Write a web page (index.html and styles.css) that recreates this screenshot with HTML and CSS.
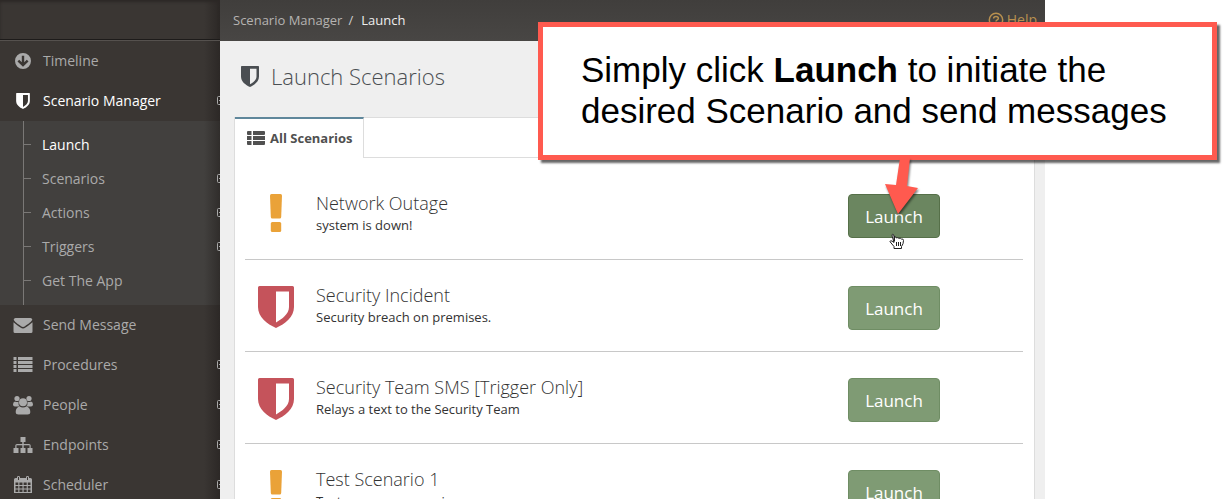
FILE: index.html
```html
<!DOCTYPE html>
<html lang="en">
<head>
    <meta charset="UTF-8">
    <meta name="viewport" content="width=device-width, initial-scale=1.0">
    <title>Launch Scenarios</title>
    <link rel="stylesheet" href="styles.css">
</head>
<body>
    <svg class="sprite" aria-hidden="true">
        <symbol id="icon-shield" viewBox="0 0 36 42">
            <path fill-rule="evenodd" d="M1.500 0H34.500Q36 0 36 1.500V21C36 31 27 38 18 42C9 38 0 31 0 21V1.500Q0 0 1.500 0ZM18 5.500V36.500C24 33 31 28 31 21V5.500Z"/>
        </symbol>
        <symbol id="icon-exclamation" viewBox="0 0 12 38">
            <path d="M1.500 0H10.500Q12 0 12 1.500L11.200 23Q11.100 24.500 9.700 24.500H2.300Q.9 24.500 .8 23L0 1.500Q0 0 1.500 0Z"/>
            <rect x=".8" y="28" width="10.400" height="10" rx="1.500"/>
        </symbol>
        <symbol id="icon-plus" viewBox="0 0 9 9">
            <path d="M1.500 .5H7.500Q8.500 .5 8.500 1.500V7.500Q8.500 8.500 7.500 8.500H1.500Q.5 8.500 .5 7.500V1.500Q.5 .5 1.500 .5ZM2 4.500H7M4.500 2V7" fill="none" stroke="currentColor"/>
        </symbol>
    </svg>

    <div class="app">
        <nav class="sidebar">
            <div class="sidebar-head"></div>
            <ul class="menu">
                <li>
                    <a href="#" class="menu-link">
                        <svg class="menu-icon" viewBox="0 0 20 20"><path fill-rule="evenodd" d="M10 2A8 8 0 1 1 10 18A8 8 0 1 1 10 2ZM8.800 4.800V11.200L6.200 8.700L4.500 10.400L10 15.700L15.500 10.400L13.800 8.700L11.200 11.200V4.800Z"/></svg>
                        Timeline
                    </a>
                </li>
                <li>
                    <a href="#" class="menu-link active">
                        <svg class="menu-icon"><use href="#icon-shield" x="3" y="2" width="14" height="16"/></svg>
                        Scenario Manager
                        <svg class="expand"><use href="#icon-plus"/></svg>
                    </a>
                    <ul class="submenu">
                        <li><a href="#" class="active">Launch</a></li>
                        <li><a href="#">Scenarios <svg class="expand"><use href="#icon-plus"/></svg></a></li>
                        <li><a href="#">Actions <svg class="expand"><use href="#icon-plus"/></svg></a></li>
                        <li><a href="#">Triggers <svg class="expand"><use href="#icon-plus"/></svg></a></li>
                        <li><a href="#">Get The App</a></li>
                    </ul>
                </li>
                <li>
                    <a href="#" class="menu-link">
                        <svg class="menu-icon" viewBox="0 0 20 20"><path d="M2.500 3H17.500Q19 3 19.300 4.500C19 6.500 15 9 12 11.200Q10 12.700 8 11.200C5 9 1 6.500 .7 4.500Q1 3 2.500 3ZM.5 7.200C3 9.500 5.500 11 7.500 12.500Q10 14.300 12.500 12.500C14.500 11 17 9.500 19.500 7.200V16.500Q19.500 18 18 18H2Q.5 18 .5 16.500Z"/></svg>
                        Send Message
                    </a>
                </li>
                <li>
                    <a href="#" class="menu-link">
                        <svg class="menu-icon" viewBox="0 0 20 20"><path d="M.5 2H3.500V5H.5ZM5 2H19.500V5H5ZM.5 6H3.500V9H.5ZM5 6H19.500V9H5ZM.5 10H3.500V13H.5ZM5 10H19.500V13H5ZM.5 14H3.500V17H.5ZM5 14H19.500V17H5Z"/></svg>
                        Procedures
                        <svg class="expand"><use href="#icon-plus"/></svg>
                    </a>
                </li>
                <li>
                    <a href="#" class="menu-link">
                        <svg class="menu-icon" viewBox="0 0 20 20"><circle cx="4" cy="3.500" r="2.600"/><circle cx="16" cy="3.500" r="2.600"/><path d="M2 6.500Q4 7.500 5.500 6.500Q5 10 7 11.500H2Q0 11.500 0 9.500Q0 7 2 6.500ZM18 6.500Q16 7.500 14.500 6.500Q15 10 13 11.500H18Q20 11.500 20 9.500Q20 7 18 6.500Z"/><circle cx="10" cy="7.300" r="4"/><path d="M6.500 11.500Q10 13.500 13.500 11.500Q17.300 12.500 17.300 17Q17.300 19.500 14.500 19.500H5.500Q2.700 19.500 2.700 17Q2.700 12.500 6.500 11.500Z"/></svg>
                        People
                        <svg class="expand"><use href="#icon-plus"/></svg>
                    </a>
                </li>
                <li>
                    <a href="#" class="menu-link">
                        <svg class="menu-icon" viewBox="0 0 20 20"><path d="M7.500 2H12.500V7H10.700V9H16Q17.700 9 17.700 10.500V13H19.500V18H14.500V13H16.500V10.200H10.700V13H12.500V18H7.500V13H9.300V10.200H3.500V13H5.500V18H.5V13H2.300V10.500Q2.300 9 4 9H9.300V7H7.500Z"/></svg>
                        Endpoints
                        <svg class="expand"><use href="#icon-plus"/></svg>
                    </a>
                </li>
                <li>
                    <a href="#" class="menu-link">
                        <svg class="menu-icon" viewBox="0 0 20 20"><path fill-rule="evenodd" d="M2.500 3H4V2Q4 1 5.500 1T7 2V3H13V2Q13 1 14.500 1T16 2V3H17.500Q19 3 19 4.500V18H1V4.500Q1 3 2.500 3ZM2.500 7.500V10H5.300V7.500ZM6.400 7.500V10H9.500V7.500ZM10.600 7.500V10H13.700V7.500ZM14.800 7.500V10H17.500V7.500ZM2.500 11V13.500H5.300V11ZM6.400 11V13.500H9.500V11ZM10.600 11V13.500H13.700V11ZM14.800 11V13.500H17.500V11ZM2.500 14.500V17H5.300V14.500ZM6.400 14.500V17H9.500V14.500ZM10.600 14.500V17H13.700V14.500ZM14.800 14.500V17H17.500V14.500Z"/><path d="M5.500 2V5M14.500 2V5" stroke="#3a3633"/></svg>
                        Scheduler
                        <svg class="expand"><use href="#icon-plus"/></svg>
                    </a>
                </li>
            </ul>
        </nav>

        <main class="content">
            <header class="topbar">
                <div class="breadcrumb">
                    <a href="#">Scenario Manager</a>
                    <span>/</span>
                    <strong>Launch</strong>
                </div>
                <a href="#" class="help">
                    <svg viewBox="0 0 16 16"><circle cx="8" cy="8" r="6.700"/><path d="M5.600 6.500Q5.700 4.500 8 4.500T10.400 6.300Q10.400 7.300 9.200 7.900Q8 8.500 8 9.500M8 10.600V12.200"/></svg>
                    Help
                </a>
            </header>

            <h1 class="page-title">
                <svg><use href="#icon-shield"/></svg>
                Launch Scenarios
            </h1>

            <section class="panel">
                <div class="tabs">
                    <a href="#" class="tab">
                        <svg viewBox="0 0 18 14"><path d="M1 0H4.500V4H1Q0 4 0 3V1Q0 0 1 0ZM6 0H17Q18 0 18 1V3Q18 4 17 4H6ZM0 5H4.500V9H0ZM6 5H18V9H6ZM0 10H4.500V14H1Q0 14 0 13ZM6 10H18V13Q18 14 17 14H6Z"/></svg>
                        All Scenarios
                    </a>
                </div>
                <ul class="scenarios">
                    <li class="scenario">
                        <svg class="scenario-icon warning"><use href="#icon-exclamation"/></svg>
                        <div>
                            <h2>Network Outage</h2>
                            <p>system is down!</p>
                        </div>
                        <button type="button" class="launch hover">Launch</button>
                    </li>
                    <li class="scenario">
                        <svg class="scenario-icon danger"><use href="#icon-shield"/></svg>
                        <div>
                            <h2>Security Incident</h2>
                            <p>Security breach on premises.</p>
                        </div>
                        <button type="button" class="launch">Launch</button>
                    </li>
                    <li class="scenario">
                        <svg class="scenario-icon danger"><use href="#icon-shield"/></svg>
                        <div>
                            <h2>Security Team SMS [Trigger Only]</h2>
                            <p>Relays a text to the Security Team</p>
                        </div>
                        <button type="button" class="launch">Launch</button>
                    </li>
                    <li class="scenario">
                        <svg class="scenario-icon warning"><use href="#icon-exclamation"/></svg>
                        <div>
                            <h2>Test Scenario 1</h2>
                            <p>Test message scenario</p>
                        </div>
                        <button type="button" class="launch">Launch</button>
                    </li>
                </ul>
            </section>
        </main>
    </div>

    <aside class="callout">
        Simply click <strong>Launch</strong> to initiate the<br>
        desired Scenario and send messages
        <svg class="arrow" viewBox="0 0 40 60"><path d="M16 0H26L23 28L34 30L14 56L1 26L12 27Z"/></svg>
        <svg class="pointer" viewBox="0 0 16 17"><path d="M5 9V3Q4.500 1 3.700 1.200Q2.700 1.500 3.200 3.200L5 9.500L3 8Q1 7.300 1 8.700L5 13.500V15.500H12.500V13.500Q14.500 11 14.500 7.500Q14.500 5.500 12.300 6Q11.500 4.700 9.800 5.300Q9 4.200 7.200 4.900L5.500 3V8M7.500 9V13M9.500 9V13M11.500 9V13"/></svg>
    </aside>
</body>
</html>
```
FILE: styles.css
```css
* {
    box-sizing: border-box;
}
body {
    margin: 0;
    height: 100vh;
    position: relative;
    overflow: hidden;
    background: #fff;
    font-family: 'Open Sans', sans-serif;
    font-size: 14px;
    color: #333;
}
ul {
    list-style: none;
    margin: 0;
    padding: 0;
}
a {
    color: inherit;
    text-decoration: none;
}
svg {
    flex: none;
    fill: currentColor;
}
.sprite {
    position: absolute;
    width: 0;
    height: 0;
}
.app {
    display: grid;
    grid-template-columns: 220px 1fr;
    min-height: 100%;
    margin-right: 183px;
}

/* Sidebar */
.sidebar {
    overflow: hidden;
    background: linear-gradient(to left, #2c2826, transparent 16px) #3a3633;
    color: #aaa;
}
.sidebar-head {
    height: 41px;
    border-bottom: 1px solid #55514e;
    box-shadow: inset 0 -1px #1d1b1a, inset 0 2px 3px #2c2826;
}
.menu-link {
    display: flex;
    align-items: center;
    gap: 10px;
    height: 40px;
    padding: 0 0 1px 13px;
}
.menu-icon {
    width: 20px;
    height: 20px;
}
.active {
    color: #fff;
    font-weight: 500;
}
.expand {
    width: 9px;
    height: 9px;
    margin-left: auto;
    margin-right: -6px;
    color: #aaa;
}
.submenu {
    padding: 6px 0 8px 23px;
    background: linear-gradient(to left, #302d2b, transparent 16px) #42403e;
    position: relative;
}
.submenu::before {
    content: "";
    position: absolute;
    top: 0;
    bottom: 0;
    left: 23px;
    border-left: 1px solid #7a7876;
}
.submenu a {
    display: flex;
    align-items: center;
    height: 34px;
}
.submenu a::before {
    content: "";
    width: 8px;
    margin-right: 11px;
    border-top: 1px solid #7a7876;
}

/* Content */
.content {
    background: #efefef;
}
.topbar {
    display: flex;
    justify-content: space-between;
    align-items: center;
    height: 41px;
    padding: 0 8px 2px 13px;
    background: linear-gradient(#403e3c, #484644);
    color: #ccc;
    font-size: 13px;
}
.breadcrumb {
    display: flex;
    gap: 6px;
}
.breadcrumb a {
    color: #b5b3b1;
}
.breadcrumb strong {
    margin-left: 2px;
    color: #eee;
    font-weight: 500;
}
.help {
    display: flex;
    align-items: center;
    gap: 3px;
    color: #b8904f;
    font-size: 14px;
}
.help svg {
    width: 16px;
    height: 16px;
    fill: none;
    stroke: currentColor;
    stroke-width: 1.5;
}
.page-title {
    display: flex;
    align-items: center;
    gap: 12px;
    height: 76px;
    margin: 0;
    padding: 0 0 6px 21px;
    color: #4a4e52;
    font-size: 22px;
    font-weight: 300;
}
.page-title svg {
    width: 18px;
    height: 21px;
}
.panel {
    margin: 0 10px 0 14px;
    background: #fff;
    border: 1px solid #ddd;
    border-bottom: 0;
}
.tabs {
    display: flex;
    height: 40px;
    border-bottom: 1px solid #ddd;
}
.tab {
    display: flex;
    align-items: center;
    gap: 5px;
    height: 41px;
    margin-top: -1px;
    padding: 0 10px 2px 12px;
    background: #fff;
    border-top: 2px solid #5f879b;
    border-right: 1px solid #ddd;
    color: #505050;
    font-size: 13px;
    font-weight: 700;
}
.tab svg {
    width: 18px;
    height: 14px;
}
.scenarios {
    padding: 10px 11px 10px 10px;
}
.scenario {
    display: grid;
    grid-template-columns: 61px 1fr 175px;
    column-gap: 10px;
    align-items: start;
    height: 92px;
    padding-top: 26px;
    border-bottom: 1px solid #c8c8c8;
}
.scenario-icon {
    justify-self: center;
    width: 36px;
    height: 42px;
}
.scenario-icon.warning {
    height: 38px;
    color: #eaa238;
}
.scenario-icon.danger {
    color: #c5535b;
}
.scenario h2 {
    margin: 0;
    color: #333;
    font-size: 18px;
    font-weight: 300;
    line-height: 18px;
}
.scenario p {
    margin: 0;
    font-size: 13px;
    line-height: 26px;
}
.launch {
    justify-self: start;
    width: 92px;
    height: 44px;
    padding: 0;
    background: #7f9b74;
    border: 1px solid #6f8d64;
    border-radius: 4px;
    color: #fff;
    font-family: inherit;
    font-size: 17px;
    font-weight: 500;
}
.launch.hover {
    background: #6b8660;
    border-color: #567049;
}

/* Tutorial callout */
.callout {
    position: absolute;
    top: 22px;
    right: 11px;
    width: 679px;
    padding: 22px 0 24px 38px;
    background: #fff;
    border: 5px solid #ff5a4f;
    box-shadow: 3px 3px 2px rgba(0, 0, 0, 0.6);
    color: #000;
    font-family: 'Liberation Sans', Arial, sans-serif;
    font-size: 35px;
    line-height: 41px;
}
.arrow {
    position: absolute;
    top: 131px;
    left: 341px;
    width: 40px;
    height: 60px;
    fill: #ff5a4f;
    filter: drop-shadow(1px 2px 1px rgba(0, 0, 0, 0.5));
}
.pointer {
    position: absolute;
    top: 206px;
    left: 346px;
    width: 16px;
    height: 17px;
    fill: #fff;
    stroke: #222;
}
```
